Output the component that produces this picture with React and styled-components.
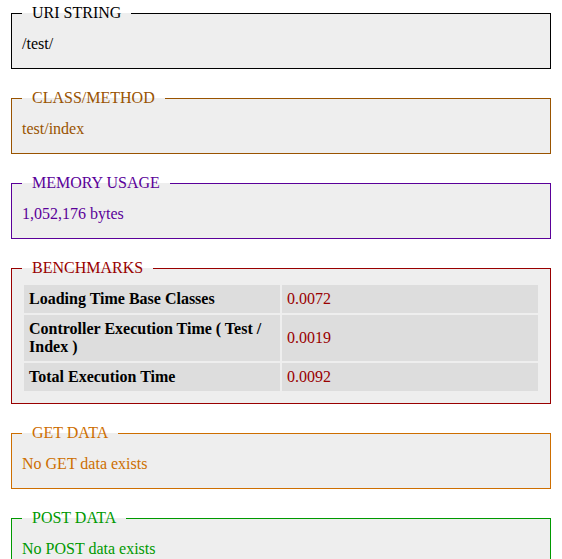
import React from "react";
import styled, { createGlobalStyle } from "styled-components";

const Global = createGlobalStyle`
  html { overflow: hidden; }
  body {
    margin: 0;
    background: #fff;
    font-family: "Liberation Serif", "Times New Roman", serif;
    font-size: 16px;
  }
`;

const Profiler = styled.div`
  padding: 4px 11px 0 11px;
  background: #fff;
`;

const Section = styled.fieldset`
  border: 1px solid ${(p) => p.$color};
  padding: 6px 10px 10px 10px;
  margin: 0 0 20px 0;
  background-color: #eee;
  min-inline-size: 0;
`;

const Legend = styled.legend`
  color: ${(p) => p.$color};
  padding: 0 10px;
`;

const Body = styled.div`
  color: ${(p) => p.$color};
  padding: 7px 0 5px 0;
`;

const Table = styled.table`
  width: 100%;
  border-spacing: 2px;
`;

const Label = styled.td`
  padding: 5px;
  width: 50%;
  color: #000;
  font-weight: bold;
  background-color: #ddd;
`;

const Value = styled.td`
  padding: 5px;
  width: 50%;
  color: #900;
  font-weight: normal;
  background-color: #ddd;
`;

const sections = [
  { title: "URI STRING", color: "#000", text: "/test/" },
  { title: "CLASS/METHOD", color: "#995300", text: "test/index" },
  { title: "MEMORY USAGE", color: "#5a0099", text: "1,052,176 bytes" },
];

const benchmarks = [
  ["Loading Time Base Classes", "0.0072"],
  ["Controller Execution Time ( Test / Index )", "0.0019"],
  ["Total Execution Time", "0.0092"],
];

export default function App() {
  return (
    <>
      <Global />
      <Profiler>
        {sections.map((s) => (
          <Section key={s.title} $color={s.color}>
            <Legend $color={s.color}>{s.title}</Legend>
            <Body $color={s.color}>{s.text}</Body>
          </Section>
        ))}
        <Section $color="#990000">
          <Legend $color="#990000">BENCHMARKS</Legend>
          <Table>
            <tbody>
              {benchmarks.map(([k, v]) => (
                <tr key={k}>
                  <Label>{k}</Label>
                  <Value>{v}</Value>
                </tr>
              ))}
            </tbody>
          </Table>
        </Section>
        <Section $color="#cd6e00">
          <Legend $color="#cd6e00">GET DATA</Legend>
          <Body $color="#cd6e00">No GET data exists</Body>
        </Section>
        <Section $color="#009900">
          <Legend $color="#009900">POST DATA</Legend>
          <Body $color="#009900">No POST data exists</Body>
        </Section>
      </Profiler>
    </>
  );
}
